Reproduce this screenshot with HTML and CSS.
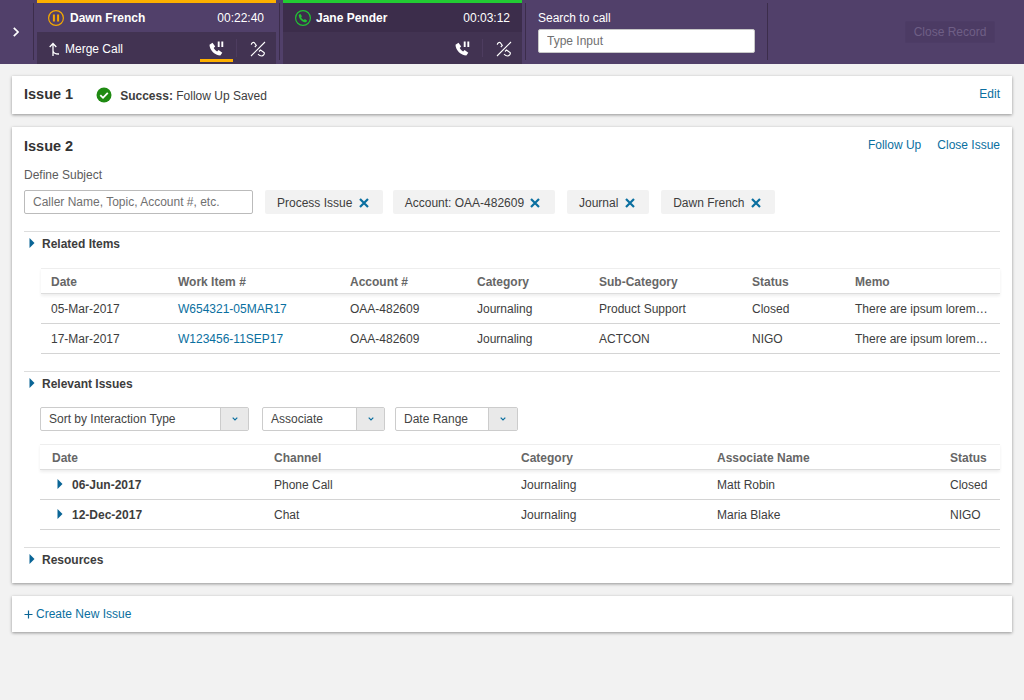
FILE: index.html
```html
<!DOCTYPE html>
<html lang="en">
<head>
<meta charset="utf-8">
<title>Issues</title>
<link rel="stylesheet" href="styles.css">
</head>
<body>
<header class="topbar">
  <button class="expand" aria-label="Expand">
    <svg width="6" height="10" viewBox="0 0 6 10"><path d="M.8 .8 5 5 .8 9.200" fill="none" stroke="#fff" stroke-width="1.700"/></svg>
  </button>
  <div class="sep"></div>
  <section class="call call-held">
    <div class="call-top">
      <svg class="status" width="16" height="16" viewBox="0 0 16 16"><circle cx="8" cy="8" r="7.400" fill="none" stroke="#f5a800" stroke-width="1.200"/><path d="M5.900 4.500v7M10.100 4.500v7" stroke="#f5a800" stroke-width="2"/></svg>
      <span class="name">Dawn French</span>
      <span class="time">00:22:40</span>
    </div>
    <div class="call-bottom">
      <span class="merge">
        <svg width="11" height="14" viewBox="0 0 11 14"><path d="M4 14V1.500M.7 5l3.300-3.500L7.300 5M4 8.500c0 2.300 2 3.500 6 3.500" fill="none" stroke="#fff" stroke-width="1.300"/></svg>
        Merge Call
      </span>
      <span class="actions">
        <span class="act act-on">
          <svg width="16" height="15" viewBox="0 0 16 15"><use href="#hold"/></svg>
        </span>
        <span class="act-sep"></span>
        <span class="act"><svg width="16" height="16" viewBox="0 0 16 16"><use href="#end"/></svg></span>
      </span>
    </div>
  </section>
  <div class="sep"></div>
  <section class="call call-live">
    <div class="call-top">
      <svg class="status" width="16" height="16" viewBox="0 0 16 16"><circle cx="8" cy="8" r="7.400" fill="none" stroke="#22c234" stroke-width="1.200"/><path d="M5.200 3.800 7 6.200 6.100 7.200c.6 1.300 1.500 2.200 2.800 2.800l1-.9 2.300 1.700-1.100 1.500C7.500 12.500 3.600 8.500 3.700 4.900z" fill="#22c234"/></svg>
      <span class="name">Jane Pender</span>
      <span class="time">00:03:12</span>
    </div>
    <div class="call-bottom call-bottom-end">
      <span class="actions">
        <span class="act"><svg width="16" height="15" viewBox="0 0 16 15"><use href="#hold"/></svg></span>
        <span class="act-sep"></span>
        <span class="act"><svg width="16" height="16" viewBox="0 0 16 16"><use href="#end"/></svg></span>
      </span>
    </div>
  </section>
  <div class="sep"></div>
  <div class="search">
    <label class="search-label" for="dial">Search to call</label>
    <input id="dial" class="search-input" placeholder="Type Input">
  </div>
  <div class="sep sep-last"></div>
  <button class="close-record">Close Record</button>
</header>

<svg class="defs" width="0" height="0" aria-hidden="true">
  <symbol id="hold" viewBox="0 0 16 15">
    <path d="M.5 3.800 3.500 1.800 6.200 5.600 4.700 7.100c.8 1.500 2 2.700 3.400 3.400l1.500-1.500 3.700 2.700-2 2.800C6 14.500 .6 9.300 .5 3.800z" fill="#fff"/>
    <path d="M9.700 .5v5.500M13.300 .5v5.500" stroke="#fff" stroke-width="1.900"/>
  </symbol>
  <symbol id="end" viewBox="0 0 16 16">
    <path d="M15 1 1 15M1.300 3.700C1.300 2.200 3.300.7 4.300 1.700L6.300 4.500 4.800 6M9 10.500 10.500 9l3.500 2.500c1 1-.5 3.500-2.500 3.500-1.500 0-3-1.300-3.500-1.800" fill="none" stroke="#fff" stroke-width="1.100"/>
  </symbol>
  <symbol id="x" viewBox="0 0 10 10">
    <path d="M1 1l8 8M9 1l-8 8" stroke="#0a6fa0" stroke-width="2.200" fill="none"/>
  </symbol>
  <symbol id="tri" viewBox="0 0 6 10">
    <path d="M0.500 0 5.500 5 0.500 10z" fill="#0a6596"/>
  </symbol>
  <symbol id="chev" viewBox="0 0 6 4">
    <path d="M.7.700 3 3 5.300.700" stroke="#0a6fa0" stroke-width="1.200" fill="none"/>
  </symbol>
</svg>

<main class="page">
  <section class="card card-one">
    <h2 class="issue-title">Issue 1</h2>
    <svg class="ok" width="16" height="16" viewBox="0 0 16 16"><circle cx="8" cy="8" r="7.500" fill="#1f8a12"/><path d="M4.300 8.200 7 10.800l4.800-5" fill="none" stroke="#fff" stroke-width="1.800"/></svg>
    <p class="success"><b>Success:</b> Follow Up Saved</p>
    <a class="link push link-raised" href="#">Edit</a>
  </section>

  <section class="card card-two">
    <div class="card-head">
      <h2 class="issue-title">Issue 2</h2>
      <a class="link push link-raised" href="#">Follow Up</a>
      <a class="link link-raised" href="#">Close Issue</a>
    </div>
    <div class="define">Define Subject</div>
    <div class="subject-row">
      <input class="subject-input" placeholder="Caller Name, Topic, Account #, etc.">
      <span class="chip chip-a">Process Issue <svg width="10" height="10"><use href="#x"/></svg></span>
      <span class="chip">Account: OAA-482609 <svg width="10" height="10"><use href="#x"/></svg></span>
      <span class="chip">Journal <svg width="10" height="10"><use href="#x"/></svg></span>
      <span class="chip">Dawn French <svg width="10" height="10"><use href="#x"/></svg></span>
    </div>

    <div class="section-head head-related"><svg width="6" height="10"><use href="#tri"/></svg>Related Items</div>
    <div class="table related">
      <div class="row th"><span>Date</span><span>Work Item #</span><span>Account #</span><span>Category</span><span>Sub-Category</span><span>Status</span><span>Memo</span></div>
      <div class="row"><span>05-Mar-2017</span><a class="link" href="#">W654321-05MAR17</a><span>OAA-482609</span><span>Journaling</span><span>Product Support</span><span>Closed</span><span class="memo">There are ipsum lorem…</span></div>
      <div class="row"><span>17-Mar-2017</span><a class="link" href="#">W123456-11SEP17</a><span>OAA-482609</span><span>Journaling</span><span>ACTCON</span><span>NIGO</span><span class="memo">There are ipsum lorem…</span></div>
    </div>

    <div class="section-head head-relevant"><svg width="6" height="10"><use href="#tri"/></svg>Relevant Issues</div>
    <div class="filters">
      <div class="select select-wide"><span class="select-text">Sort by Interaction Type</span><span class="select-btn"><svg width="6" height="4"><use href="#chev"/></svg></span></div>
      <div class="select select-assoc"><span class="select-text">Associate</span><span class="select-btn"><svg width="6" height="4"><use href="#chev"/></svg></span></div>
      <div class="select select-date"><span class="select-text">Date Range</span><span class="select-btn"><svg width="6" height="4"><use href="#chev"/></svg></span></div>
    </div>
    <div class="table relevant">
      <div class="row th"><span class="date-h">Date</span><span>Channel</span><span>Category</span><span>Associate Name</span><span>Status</span></div>
      <div class="row"><span class="date-cell"><svg width="6" height="10"><use href="#tri"/></svg><b>06-Jun-2017</b></span><span>Phone Call</span><span>Journaling</span><span>Matt Robin</span><span>Closed</span></div>
      <div class="row"><span class="date-cell"><svg width="6" height="10"><use href="#tri"/></svg><b>12-Dec-2017</b></span><span>Chat</span><span>Journaling</span><span>Maria Blake</span><span>NIGO</span></div>
    </div>

    <div class="section-head head-resources"><svg width="6" height="10"><use href="#tri"/></svg>Resources</div>
  </section>

  <section class="card card-three">
    <a class="link create" href="#"><svg width="9" height="9" viewBox="0 0 9 9"><path d="M4.500.5v8M.5 4.500h8" stroke="#0a6596" stroke-width="1.200"/></svg>Create New Issue</a>
  </section>
</main>
</body>
</html>
```
FILE: styles.css
```css
* { box-sizing: border-box; }
html, body { margin: 0; padding: 0; }
body {
  width: 1024px;
  height: 700px;
  overflow: hidden;
  background: #f2f2f2;
  font-family: "Liberation Sans", Arial, sans-serif;
  font-size: 12px;
  color: #3d3d3d;
}
.defs { position: absolute; }
.topbar {
  display: flex;
  height: 64px;
  background: #51406a;
  color: #fff;
}
.expand {
  width: 33px;
  padding: 0 2px 0 0;
  border: 0;
  background: transparent;
  display: flex;
  align-items: center;
  justify-content: center;
}
.sep {
  width: 1px;
  margin-top: 3px;
  margin-bottom: 4px;
  background: #3c2d4b;
}
.call {
  width: 239px;
  margin: 0 3px;
  display: flex;
  flex-direction: column;
  border-top: 3px solid #fdb000;
}
.call-live { border-top-color: #22cc33; }
.call-top {
  height: 29px;
  display: flex;
  align-items: center;
  padding: 0 12px 0 11px;
}
.call-live .call-top { background: #3c2d4b; padding-left: 12px; }
.status { margin-right: 6px; }
.call-live .status { margin-right: 5px; }
.name { font-weight: bold; }
.time { margin-left: auto; }
.call-bottom {
  height: 32px;
  background: #423352;
  display: flex;
  align-items: center;
  padding-left: 12px;
}
.call-bottom-end { justify-content: flex-end; }
.merge { display: flex; align-items: center; gap: 5px; padding-top: 1px; }
.actions { margin-left: auto; display: flex; align-items: center; height: 32px; }
.act {
  width: 33px;
  height: 32px;
  padding-top: 1px;
  display: flex;
  align-items: center;
  justify-content: center;
}
.act-on {
  position: relative;
}
.act-on::after {
  content: "";
  position: absolute;
  left: 0;
  right: 0;
  bottom: 2px;
  height: 3px;
  background: #fdb000;
}
.act-sep { width: 1px; height: 18px; margin: 0 4px 0 3px; background: #4d3c5f; }
.act + .act-sep + .act { margin-right: 2px; }
.search {
  width: 241px;
  padding: 11px 12px 0 12px;
  display: flex;
  flex-direction: column;
}
.search-label { line-height: 14px; margin-bottom: 4px; }
.search-input {
  width: 217px;
  height: 24px;
  border: 1px solid #c8c8c8;
  border-radius: 2px;
  padding: 0 8px;
  font: 12px "Liberation Sans", Arial, sans-serif;
  color: #333;
}
.search-input::placeholder, .subject-input::placeholder { color: #707070; opacity: 1; }
.close-record {
  margin: 21px 0 0 137px;
  width: 90px;
  height: 22px;
  border: 1px solid #4d3c66;
  border-radius: 2px;
  background: #4c3b64;
  color: #6f5f86;
  font: 12px "Liberation Sans", Arial, sans-serif;
  padding: 0;
}
.page {
  padding: 12px 12px 0;
  display: flex;
  flex-direction: column;
  gap: 13px;
}
.card {
  background: #fff;
  box-shadow: 0 1px 3px rgba(0,0,0,.4);
  padding: 0 12px;
}
.card-one {
  height: 38px;
  display: flex;
  align-items: center;
}
.issue-title { margin: 0; font-size: 14.500px; font-weight: bold; color: #333; }
.card-one .issue-title { margin-bottom: 2px; }
.ok { margin-left: 23px; margin-right: 8px; }
.success { margin: 2px 0 0; }
.link { color: #0a6fa0; text-decoration: none; }
.link-raised { margin-bottom: 2px; }
.push { margin-left: auto; }
.card-two { height: 456px; padding-top: 10px; }
.card-head { display: flex; align-items: center; height: 18px; gap: 16px; }
.define { margin-top: 13px; line-height: 14px; color: #5c5c5c; }
.subject-row { display: flex; align-items: center; margin-top: 8px; }
.subject-input {
  width: 229px;
  height: 24px;
  margin-right: 12px;
  border: 1px solid #bbb;
  border-radius: 2px;
  padding: 0 8px;
  font: 12px "Liberation Sans", Arial, sans-serif;
}
.chip {
  height: 24px;
  margin-right: 12px;
  padding: 1px 14.500px 0 12px;
  display: flex;
  align-items: center;
  gap: 3px;
  background: #f2f2f2;
  border-radius: 2px;
  white-space: pre;
}
.chip-a { margin-right: 9.500px; }
.section-head {
  height: 26px;
  display: flex;
  align-items: center;
  gap: 7px;
  border-top: 1px solid #ddd;
  font-weight: bold;
  padding: 0 0 1px 5px;
}
.section-head svg { margin-top: -2px; }
.head-related { margin-top: 17px; }
.head-relevant { margin-top: 17px; }
.head-resources { margin-top: 17px; }
.table { margin-left: 17px; margin-top: 11px; }
.row {
  display: grid;
  height: 30px;
  align-items: center;
  border-bottom: 1px solid #d4d4d4;
}
.row.th {
  height: 26px;
  border-top: 1px solid #eee;
  border-bottom: 1px solid #ddd;
  font-weight: bold;
  color: #666;
  box-shadow: 0 2px 3px rgba(0,0,0,.07);
}
.related .row.th { padding-top: 2px; }
.relevant .row.th { padding-top: 1px; }
.related .row {
  grid-template-columns: 127px 172px 127px 122px 153px 103px 1fr;
  padding-left: 10px;
}
.memo { white-space: nowrap; }
.relevant { margin-left: 16px; margin-top: 13px; }
.relevant .row {
  grid-template-columns: 234px 247px 196px 233px 1fr;
}
.date-h { padding-left: 12px; }
.date-cell { display: flex; align-items: center; gap: 9px; padding-left: 17px; }
.date-cell svg { margin-top: -2px; }
.filters { display: flex; margin: 10px 0 0 16px; }
.select {
  height: 24px;
  display: flex;
  border: 1px solid #ccc;
  border-radius: 2px;
}
.select-wide { width: 209px; margin-right: 13px; }
.select-assoc { width: 123px; margin-right: 10px; }
.select-date { width: 123px; }
.select-date .select-btn { width: 29px; }
.select-text { flex: 1; padding-left: 8px; line-height: 22px; color: #444; }
.select-btn {
  width: 28px;
  display: flex;
  align-items: center;
  justify-content: center;
  background: #e9e9e9;
  border-left: 1px solid #ccc;
}
.card-three { height: 36px; display: flex; align-items: center; }
.create { display: flex; align-items: center; gap: 3px; }
```
